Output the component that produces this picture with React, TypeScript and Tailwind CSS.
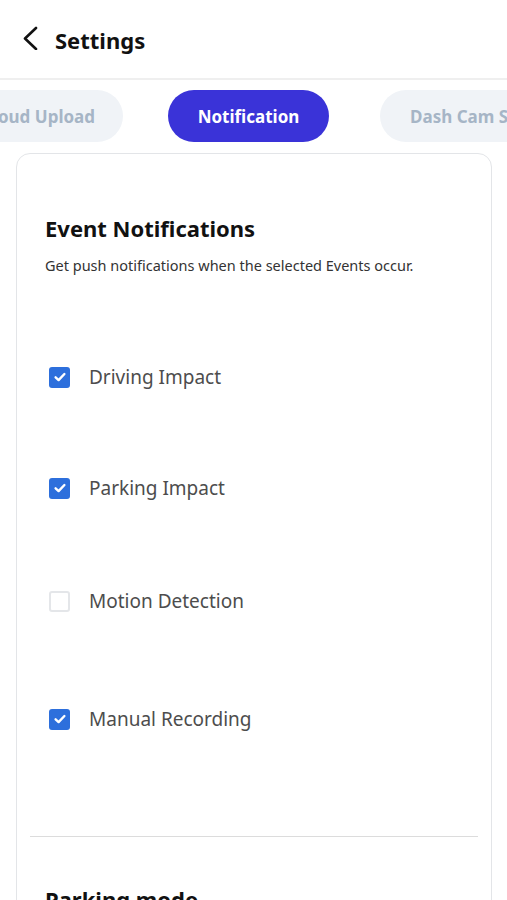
import React, { useState } from 'react';

interface EventOption {
  id: string;
  label: string;
  checked: boolean;
  gap: string;
}

const initialOptions: EventOption[] = [
  { id: 'driving', label: 'Driving Impact', checked: true, gap: 'mt-[88px]' },
  { id: 'parking', label: 'Parking Impact', checked: true, gap: 'mt-[83px]' },
  { id: 'motion', label: 'Motion Detection', checked: false, gap: 'mt-[85px]' },
  { id: 'manual', label: 'Manual Recording', checked: true, gap: 'mt-[90px]' },
];

const CheckBox: React.FC<{ checked: boolean }> = ({ checked }) =>
  checked ? (
    <div className="flex h-[21px] w-[21px] items-center justify-center rounded-[3px] bg-[#2d6fdc]">
      <svg width="14" height="14" viewBox="0 0 14 14" fill="none">
        <path d="M2.6 7.3 5.6 10.1 11.4 4" stroke="white" strokeWidth="2.4" strokeLinecap="round" strokeLinejoin="round" />
      </svg>
    </div>
  ) : (
    <div className="h-[21px] w-[21px] rounded-[3px] border-2 border-[#e4e6e9] bg-white" />
  );

const App: React.FC = () => {
  const [options, setOptions] = useState(initialOptions);

  const toggle = (id: string) =>
    setOptions(prev => prev.map(o => (o.id === id ? { ...o, checked: !o.checked } : o)));

  return (
    <div className="h-[900px] w-full overflow-hidden bg-white font-['Noto_Sans',sans-serif]">
      {/* header */}
      <div className="flex h-[80px] items-center border-b-2 border-[#efefef] pl-[22px] pt-[3px]">
        <svg width="17" height="24" viewBox="0 0 17 24" fill="none" className="mt-[-5px]">
          <path d="M14 2 3 12.5 14 23" stroke="#111" strokeWidth="2.6" strokeLinecap="round" strokeLinejoin="round" />
        </svg>
        <span className="ml-[16px] text-[22px] font-bold text-[#111]">Settings</span>
      </div>

      {/* tabs */}
      <div className="mt-[10px] flex whitespace-nowrap">
        <div className="ml-[-46px] flex h-[52px] w-[169px] shrink-0 items-center justify-center rounded-full bg-[#f0f3f7] pt-[2px] text-[17px] font-bold text-[#a6b5c6]">
          Cloud Upload
        </div>
        <div className="ml-[45px] flex h-[52px] w-[161px] shrink-0 items-center justify-center rounded-full bg-[#3a33d8] pt-[2px] text-[17px] font-bold text-white">
          Notification
        </div>
        <div className="ml-[51px] flex h-[52px] shrink-0 items-center rounded-full bg-[#f0f3f7] px-[30px] pt-[2px] text-[17px] font-bold text-[#a6b5c6]">
          Dash Cam Settings
        </div>
      </div>

      {/* card */}
      <div className="mt-[11px] pl-[16px] pr-[15px]">
        <div className="rounded-[14px] border-[1.5px] border-[#e3e5e8] px-[28px] pt-[59px] pb-[40px]">
          <div className="text-[22px] font-bold leading-[30px] text-[#111]">Event Notifications</div>
          <div className="mt-[12px] text-[14.5px] leading-[20px] text-[#333]">
            Get push notifications when the selected Events occur.
          </div>

          {options.map(o => (
            <button
              key={o.id}
              onClick={() => toggle(o.id)}
              className={`flex h-[28px] items-center pl-[4px] ${o.gap}`}
            >
              <CheckBox checked={o.checked} />
              <span className="ml-[19px] text-[19px] text-[#4d4d4d]">{o.label}</span>
            </button>
          ))}

          <div className="mx-[-15px] mt-[103px] h-px bg-[#dcdcdc]" />

          <div className="mt-[47px] text-[22px] font-bold leading-[30px] text-[#111]">Parking mode</div>
        </div>
      </div>
    </div>
  );
};

export default App;
